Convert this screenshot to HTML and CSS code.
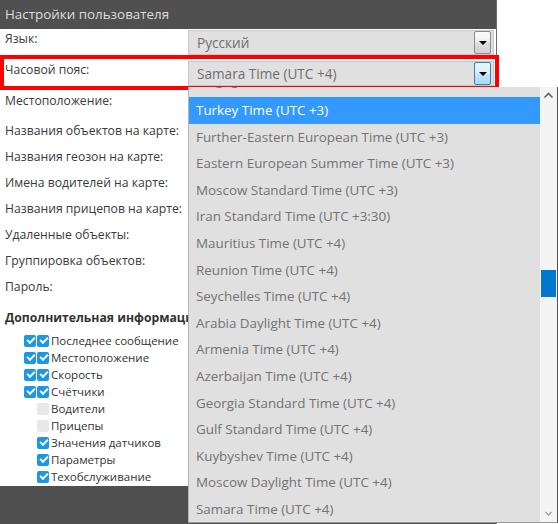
FILE: index.html
```html
<!DOCTYPE html>
<html lang="ru">
<head>
<meta charset="utf-8">
<title>Настройки пользователя</title>
<link rel="stylesheet" href="styles.css">
</head>
<body>
<div class="screen">
  <div class="dialog">
    <div class="titlebar">Настройки пользователя</div>
    <div class="content">
      <div class="row first">
        <span class="label">Язык:</span>
        <div class="select"><span class="value">Русский</span><span class="btn"></span></div>
      </div>
      <div class="row second">
        <span class="label">Часовой пояс:</span>
        <div class="select active"><span class="value">Samara Time (UTC +4)</span><span class="btn"></span></div>
      </div>
      <div class="row tall"><span class="label">Местоположение:</span></div>
      <div class="row"><span class="label">Названия объектов на карте:</span></div>
      <div class="row"><span class="label">Названия геозон на карте:</span></div>
      <div class="row"><span class="label">Имена водителей на карте:</span></div>
      <div class="row"><span class="label">Названия прицепов на карте:</span></div>
      <div class="row"><span class="label">Удаленные объекты:</span></div>
      <div class="row"><span class="label">Группировка объектов:</span></div>
      <div class="row"><span class="label">Пароль:</span></div>
      <div class="section">Дополнительная информация</div>
      <ul class="checks">
        <li><span class="cb on"></span><span class="cb on"></span>Последнее сообщение</li>
        <li><span class="cb on"></span><span class="cb on"></span>Местоположение</li>
        <li><span class="cb on"></span><span class="cb on"></span>Скорость</li>
        <li><span class="cb on"></span><span class="cb on"></span>Счётчики</li>
        <li class="sub"><span class="cb"></span>Водители</li>
        <li class="sub"><span class="cb"></span>Прицепы</li>
        <li class="sub"><span class="cb on"></span>Значения датчиков</li>
        <li class="sub"><span class="cb on"></span>Параметры</li>
        <li class="sub"><span class="cb on"></span>Техобслуживание</li>
      </ul>
    </div>
    <div class="footer"></div>
  </div>

  <div class="focus-frame"></div>

  <div class="dropdown">
    <div class="options">
      <div class="items">
        <div class="item partial">Volgograd Time (UTC +3)</div>
        <div class="item selected">Turkey Time (UTC +3)</div>
        <div class="item">Further-Eastern European Time (UTC +3)</div>
        <div class="item">Eastern European Summer Time (UTC +3)</div>
        <div class="item">Moscow Standard Time (UTC +3)</div>
        <div class="item">Iran Standard Time (UTC +3:30)</div>
        <div class="item">Mauritius Time (UTC +4)</div>
        <div class="item">Reunion Time (UTC +4)</div>
        <div class="item">Seychelles Time (UTC +4)</div>
        <div class="item">Arabia Daylight Time (UTC +4)</div>
        <div class="item">Armenia Time (UTC +4)</div>
        <div class="item">Azerbaijan Time (UTC +4)</div>
        <div class="item">Georgia Standard Time (UTC +4)</div>
        <div class="item">Gulf Standard Time (UTC +4)</div>
        <div class="item">Kuybyshev Time (UTC +4)</div>
        <div class="item">Moscow Daylight Time (UTC +4)</div>
        <div class="item">Samara Time (UTC +4)</div>
      </div>
    </div>
    <div class="scrollbar">
      <svg class="arrow" width="17" height="17" viewBox="0 0 17 17"><path d="M4.5 10.5 L8.5 6.5 L12.5 10.5" fill="none" stroke="#606060" stroke-width="1.6"/></svg>
      <div class="track"><div class="thumb"></div></div>
      <svg class="arrow" width="17" height="17" viewBox="0 0 17 17"><path d="M5.5 7 L8.5 10 L11.5 7" fill="none" stroke="#a0a0a0" stroke-width="1.3"/></svg>
    </div>
  </div>
</div>
</body>
</html>
```

FILE: styles.css
```css
* { box-sizing: border-box; }
html, body { margin: 0; padding: 0; background: #ffffff; }
body {
  font-family: "Open Sans", "Noto Sans", sans-serif;
  font-size: 12.2px;
  color: #3a3a3a;
}
.screen {
  position: relative;
  width: 558px;
  height: 524px;
  overflow: hidden;
}
.dialog {
  width: 497px;
  height: 524px;
  display: flex;
  flex-direction: column;
  border-right: 1px solid #6a6a6a;
}
.titlebar {
  height: 29px;
  background: #505050;
  color: #dedede;
  font-size: 13.4px;
  line-height: 29px;
  padding-left: 5px;
  flex: none;
}
.content {
  flex: 1;
  background: #ffffff;
  padding-left: 5px;
  overflow: hidden;
}
.footer {
  height: 38px;
  flex: none;
  background: #4f4f4f;
}
.row {
  display: flex;
  align-items: flex-start;
  height: 26px;
}
.row .label {
  width: 183px;
  line-height: 18px;
  flex: none;
  white-space: nowrap;
}
.row.first { height: 32px; padding-top: 1px; }
.row.second { height: 31px; }
.row.tall { height: 30px; }
.select {
  width: 306px;
  height: 25px;
  background: #e0e0e0;
  border: 1px solid #c8c8c8;
  display: flex;
  align-items: center;
  justify-content: space-between;
  padding: 0 2px 0 8px;
}
.select .value {
  font-size: 13.6px;
  color: #6e6e6e;
}
.select .btn {
  width: 17px;
  height: 23px;
  border: 1px solid #8c8c8c;
  border-radius: 2px;
  background: linear-gradient(#fbfbfb, #f0f0f0 45%, #dcdcdc 55%, #d2d2d2);
  position: relative;
}
.select .btn::after {
  content: "";
  position: absolute;
  left: 4px;
  top: 9px;
  border-left: 4px solid transparent;
  border-right: 4px solid transparent;
  border-top: 4px solid #000;
}
.select.active .btn {
  border-color: #3c7fb1;
  background: linear-gradient(#eaf6fd, #d9f0fc 45%, #bee6fd 55%, #a7d9f5);
}
.section {
  margin-top: 5px;
  font-weight: bold;
  font-size: 12.2px;
  line-height: 18px;
  color: #333;
  white-space: nowrap;
}
.checks {
  list-style: none;
  margin: 5px 0 0 19px;
  padding: 0;
  font-size: 11.5px;
}
.checks li {
  display: flex;
  align-items: center;
  height: 17px;
  color: #333;
  white-space: nowrap;
}
.checks li.sub { padding-left: 13px; }
.cb {
  width: 12px;
  height: 12px;
  border-radius: 2px;
  background: #e8e8e8;
  margin-right: 1px;
  flex: none;
  position: relative;
}
.cb + .cb { margin-right: 2px; }
.checks li.sub .cb { margin-right: 2px; }
.cb.on { background: #1a98e2; }
.cb.on::after {
  content: "";
  position: absolute;
  left: 3px;
  top: 2px;
  width: 6px;
  height: 3px;
  border-left: 2px solid #fff;
  border-bottom: 2px solid #fff;
  transform: rotate(-45deg);
}
.focus-frame {
  position: absolute;
  left: 0;
  top: 55px;
  width: 499px;
  height: 35px;
  border: 4px solid #ff0000;
}
.dropdown {
  position: absolute;
  left: 188px;
  top: 87px;
  width: 370px;
  height: 436px;
  display: flex;
  background: #e0e0e0;
  border-left: 1px solid #b4b4b4;
  border-bottom: 1px solid #9a9a9a;
  border-right: 1px solid #505050;
}
.options {
  flex: 1;
  overflow: hidden;
}
.items { margin-top: -16.6px; }
.item {
  height: 26.6px;
  line-height: 26.6px;
  padding-left: 7px;
  font-size: 13.4px;
  color: #727272;
  white-space: nowrap;
}
.item.partial { line-height: 20px; }
.item.selected {
  background: #3399ff;
  color: #ffffff;
}
.scrollbar {
  width: 17px;
  flex: none;
  background: #f4f4f4;
  display: flex;
  flex-direction: column;
}
.scrollbar .arrow { flex: none; display: block; }
.track { flex: 1; padding-top: 166px; }
.thumb {
  width: 15px;
  height: 27px;
  margin-left: 1px;
  background: #0078d0;
}
```
